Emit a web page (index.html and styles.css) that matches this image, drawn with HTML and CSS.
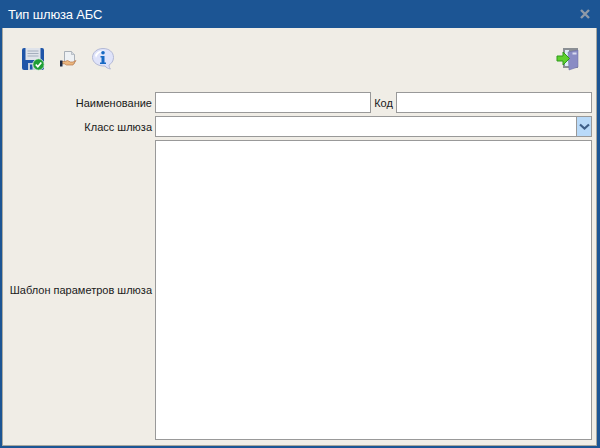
FILE: index.html
```html
<!DOCTYPE html>
<html lang="ru">
<head>
<meta charset="utf-8">
<title>Тип шлюза АБС</title>
<link rel="stylesheet" href="styles.css">
</head>
<body>
<div class="window">
  <header class="titlebar">
    <span class="title">Тип шлюза АБС</span>
    <svg class="close" width="10" height="10" viewBox="0 0 10 10"><path d="M1 1l8 8M9 1l-8 8" stroke="#8f9aa8" stroke-width="2.400"/></svg>
  </header>
  <main class="panel">
    <div class="toolbar">
      <div class="tools">
        <svg class="icon" width="24" height="24" viewBox="0 0 24 24">
          <rect x="1" y="1" width="22" height="22" rx="2" fill="#1f55a8"/>
          <rect x="4.500" y="1" width="15" height="12" fill="#dfe3ea"/>
          <path d="M6.500 4h11M6.500 6.500h11M6.500 9h11" stroke="#a4aebd"/>
          <rect x="7" y="16" width="10" height="7" fill="#c6d0de"/>
          <rect x="9" y="17.500" width="2.500" height="5" fill="#1f55a8"/>
          <circle cx="17.500" cy="17.500" r="5.700" fill="#1f9e35" stroke="#e6f4e6" stroke-width=".8"/>
          <path d="M14.800 17.500l2 2.200 3.500-4.200" stroke="#fff" stroke-width="1.700" fill="none"/>
        </svg>
        <svg class="icon" width="18" height="20" viewBox="0 0 18 20">
          <path d="M5.500 2.500h7l3 3v9h-10z" fill="#eef1f4" stroke="#a9b0b8"/>
          <path d="M12.500 2.500v3h3" fill="#d5dae0" stroke="#a9b0b8" stroke-width=".7"/>
          <path d="M2.500 12.500h3.500l2.500-1 3 1.500h2.500l3-1.500-3 4.500h-6.500l-2-1.200h-3z" fill="#ebb67e" stroke="#b9784a" stroke-width=".7"/>
          <rect x="1" y="11.500" width="2.500" height="6" fill="#1d2a45"/>
        </svg>
        <svg class="icon" width="24" height="24" viewBox="0 0 24 24">
          <path d="M12 1.500c6 0 10.500 3.500 10.500 9 0 3.500-2 6-4.500 7.500 0 1.500.5 3 1.500 4-2.500-.5-4.500-1.500-5.500-3-7 .5-12.500-3.500-12.500-8.500s4.500-9 10.500-9z" fill="#dfe3fa" stroke="#b3b9d6"/>
          <path d="M4 8c2-4 6-5 10-4-4 0-7 2-9 7z" fill="#fff"/>
          <circle cx="12" cy="5.800" r="1.800" fill="#1769c4"/>
          <path d="M9.500 9h4v6.500h1.500v1.500h-6v-1.500h1.500v-5h-1z" fill="#1769c4"/>
        </svg>
      </div>
      <svg class="icon" width="24" height="24" viewBox="0 0 24 24">
        <rect x="7" y="1" width="15" height="20" fill="#8b8f94"/>
        <rect x="9" y="3" width="4" height="16" fill="#dcecf8"/>
        <path d="M12 5l10-2v17l-9 3z" fill="#8a8cc4" stroke="#6b6d9e" stroke-width=".5"/>
        <rect x="16.500" y="5.500" width="4" height="2" fill="#d8daf0"/>
        <path d="M1 9h6v-4l6.500 6.500-6.500 6.500v-4h-6z" fill="#5fd02e" stroke="#2e9a1c"/>
      </svg>
    </div>
    <form class="form">
      <label class="label">Наименование</label>
      <div class="name-row">
        <input class="field name" type="text">
        <label class="code-label">Код</label>
        <input class="field code" type="text">
      </div>
      <label class="label">Класс шлюза</label>
      <div class="combo">
        <input class="combo-input" type="text">
        <span class="combo-btn">
          <svg width="11" height="7" viewBox="0 0 11 7"><path d="M1 1.500l4.500 4 4.500-4" fill="none" stroke="#3f5f88" stroke-width="2.200"/></svg>
        </span>
      </div>
      <label class="label">Шаблон параметров шлюза</label>
      <textarea class="field area"></textarea>
    </form>
  </main>
</div>
</body>
</html>
```
FILE: styles.css
```css
* { box-sizing: border-box; }
html, body { margin: 0; height: 100%; }
body {
  width: 600px;
  height: 448px;
  overflow: hidden;
  font-family: "Liberation Sans", Arial, sans-serif;
}
.window {
  display: flex;
  flex-direction: column;
  height: 448px;
  background: #1c5594;
  padding: 0 3px 2px 2px;
}
.titlebar {
  height: 28px;
  flex: none;
  display: flex;
  align-items: center;
  justify-content: space-between;
  padding: 0 6px 0 6px;
  color: #fff;
}
.title {
  font-size: 13px;
  letter-spacing: -0.15px;
}
.close { display: block; margin-right: 1px; }
.panel {
  flex: 1;
  min-height: 0;
  display: flex;
  flex-direction: column;
  background: #f0ede6;
  border-left: 1px solid #a8a8a0;
  border-right: 1px solid #a8a8a0;
  border-bottom: 1px solid #a8a8a0;
}
.toolbar {
  height: 64px;
  flex: none;
  display: flex;
  align-items: center;
  justify-content: space-between;
  padding: 0 16px 2px 18px;
}
.tools { display: flex; align-items: center; gap: 14px; }
.icon { display: block; }
.form {
  flex: 1;
  min-height: 0;
  display: grid;
  grid-template-columns: 149px 437px;
  grid-template-rows: 21px 21px 300px;
  column-gap: 3px;
  row-gap: 3px;
  font-size: 11px;
  color: #1a1a1a;
}
.label {
  display: flex;
  align-items: center;
  justify-content: flex-end;
  white-space: nowrap;
}
.name-row {
  display: flex;
  align-items: stretch;
}
.code-label {
  width: 25px;
  display: flex;
  align-items: center;
  justify-content: center;
}
.field {
  display: block;
  margin: 0;
  padding: 2px;
  background: #fff;
  border: 1px solid #999;
  border-radius: 0;
  outline: none;
  resize: none;
}
.name { width: 216px; }
.code { width: 196px; }
.combo {
  display: flex;
  width: 437px;
  background: #fff;
  border: 1px solid #999;
}
.combo-input {
  flex: 1;
  min-width: 0;
  border: 0;
  padding: 2px;
  outline: none;
  background: #fff;
}
.combo-btn {
  width: 15px;
  flex: none;
  display: flex;
  align-items: center;
  justify-content: center;
  background: #b9daf9;
  border-left: 1px solid #999;
}
.area { width: 437px; height: 300px; }
```
